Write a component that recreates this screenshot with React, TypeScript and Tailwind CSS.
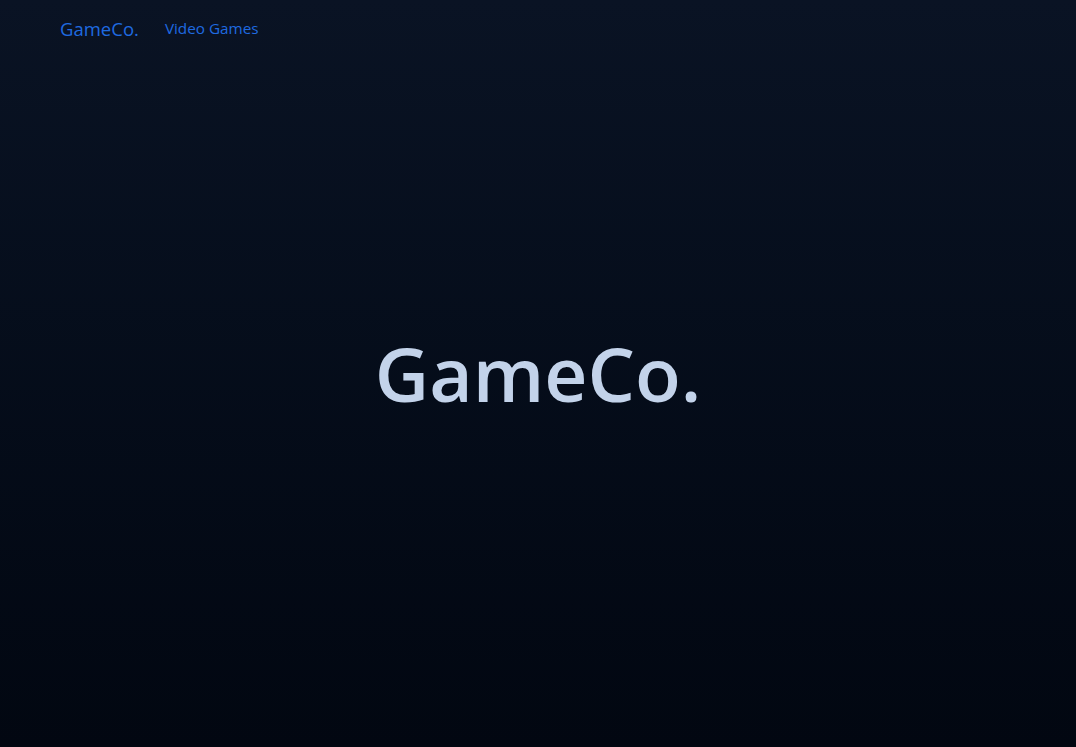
export default function App() {
  return (
    <div className="flex h-[747px] w-full flex-col bg-gradient-to-b from-[#0a1324] to-[#020711] font-['Open_Sans',sans-serif]">
      <nav className="flex items-center gap-[26px] px-[60px] pt-[15px]">
        <a className="text-[18.5px] text-[#1f6ae0]">GameCo.</a>
        <a className="text-[15.3px] text-[#1f6ae0]">Video Games</a>
      </nav>
      <main className="flex flex-1 items-center justify-center pb-[44px]">
        <h1 className="text-[75px] font-semibold text-[#c3d3ea]">GameCo.</h1>
      </main>
    </div>
  );
}
